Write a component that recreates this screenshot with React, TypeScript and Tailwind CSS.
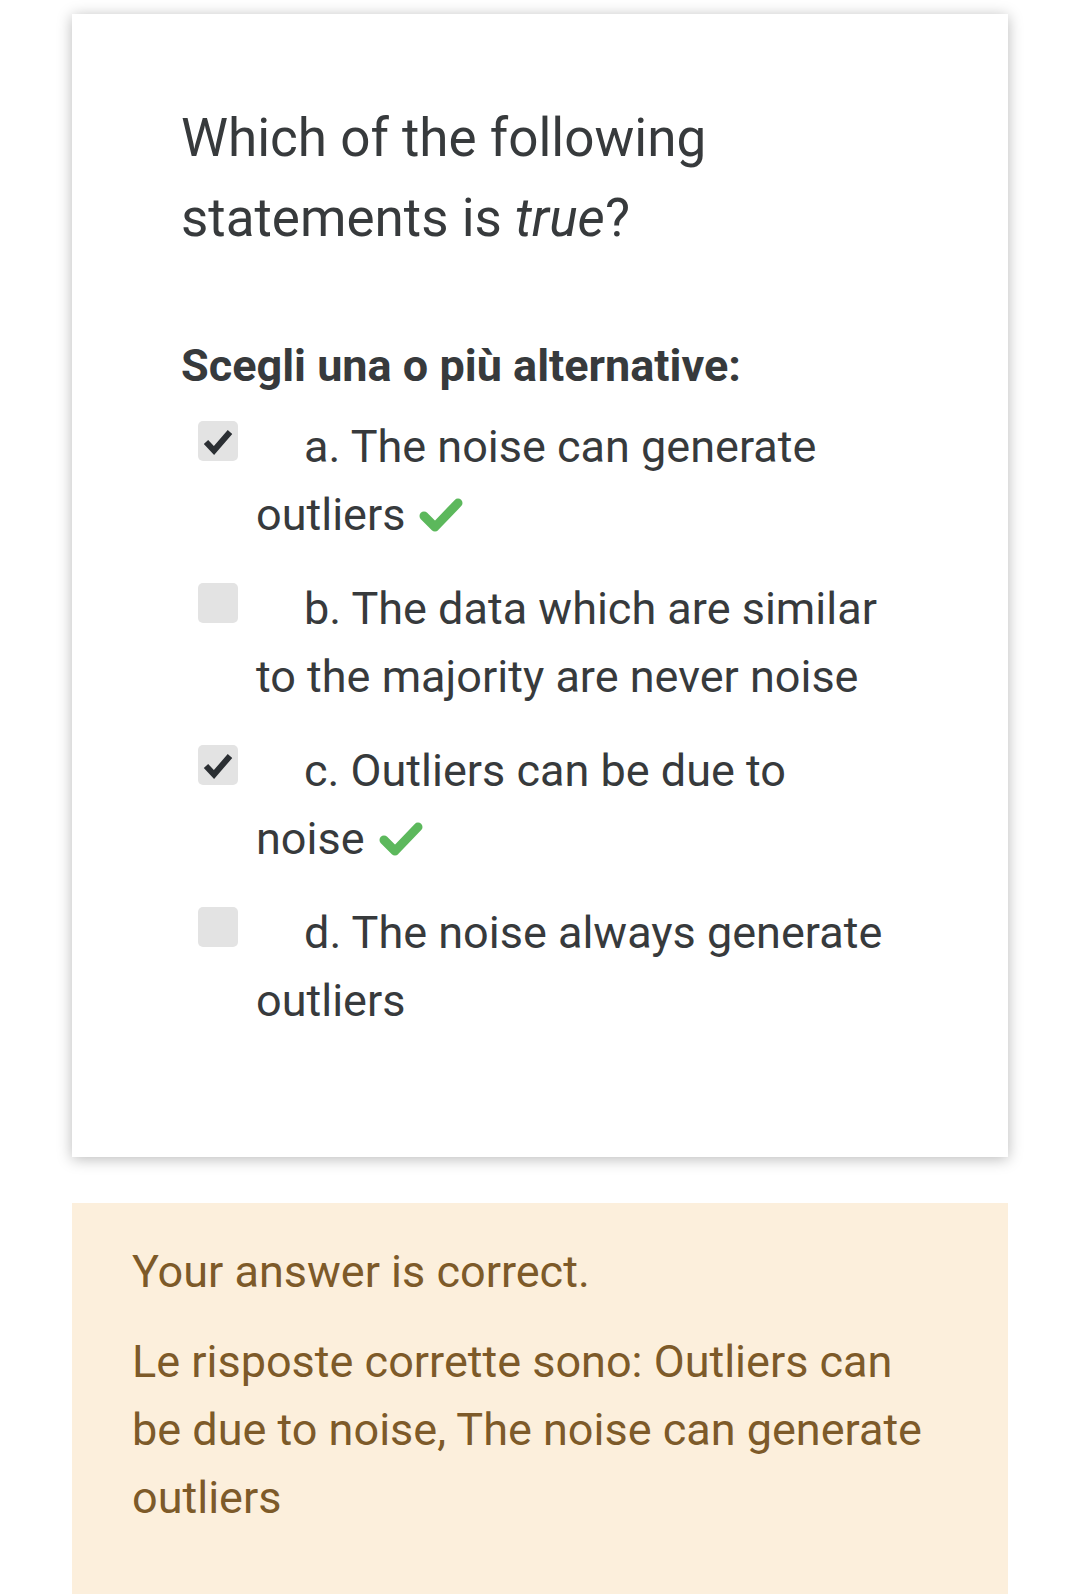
import React from "react";

function BoxCheck() {
  return (
    <svg width="30" height="28" viewBox="0 0 30 28" className="block mx-auto mt-[7px]">
      <path d="M3 14 L11 22.5 L27 4" fill="none" stroke="#2b2f33" strokeWidth="6" strokeLinejoin="miter" strokeLinecap="butt" />
    </svg>
  );
}

function GreenCheck() {
  return (
    <svg width="46" height="36" viewBox="0 0 46 36" className="inline-block align-[-3px] ml-[13px]">
      <path d="M6 19 L17 30 L40 6" fill="none" stroke="#5cb85c" strokeWidth="9" strokeLinecap="round" strokeLinejoin="round" />
    </svg>
  );
}

function Option({ letter, text, checked, correct }: { letter: string; text: string; checked: boolean; correct: boolean }) {
  return (
    <div className="pl-[184px] pr-[113px] text-[45px] leading-[68px] text-[#373a3c]">
      <span className="inline-block overflow-hidden w-[40px] h-[40px] rounded-[5px] bg-[#e3e3e3] align-[1px] ml-[-58px] mr-[66px]">
        {checked ? <BoxCheck /> : null}
      </span>
      {letter}. {text}
      {correct ? <GreenCheck /> : null}
    </div>
  );
}

export default function App() {
  return (
    <div className="bg-white min-h-[1594px] px-[72px] pt-[14px] pb-0" style={{ fontFamily: "Roboto, 'Noto Sans', sans-serif" }}>
      <div className="w-[936px] bg-white shadow-[0_2px_14px_rgba(0,0,0,0.28)] pt-[84px] pb-[122px]">
        <div className="pl-[109px] pr-[109px] text-[53px] leading-[80px] text-[#373a3c]">
          Which of the following statements is <em>true</em>?
        </div>
        <div className="pl-[109px] mt-[80px] text-[45px] leading-[56px] font-bold text-[#373a3c]">
          Scegli una o più alternative:
        </div>
        <div className="mt-[19px] flex flex-col gap-[26px]">
          <Option letter="a" text="The noise can generate outliers" checked correct />
          <Option letter="b" text="The data which are similar to the majority are never noise" checked={false} correct={false} />
          <Option letter="c" text="Outliers can be due to noise" checked correct />
          <Option letter="d" text="The noise always generate outliers" checked={false} correct={false} />
        </div>
      </div>
      <div className="w-[936px] mt-[46px] bg-[#fcefdc] pl-[60px] pr-[73px] pt-[35px] pb-[110px] text-[45px] leading-[68px] text-[#7d5a29]">
        <div>Your answer is correct.</div>
        <div className="mt-[22px]">Le risposte corrette sono: Outliers can be due to noise, The noise can generate outliers</div>
      </div>
    </div>
  );
}
